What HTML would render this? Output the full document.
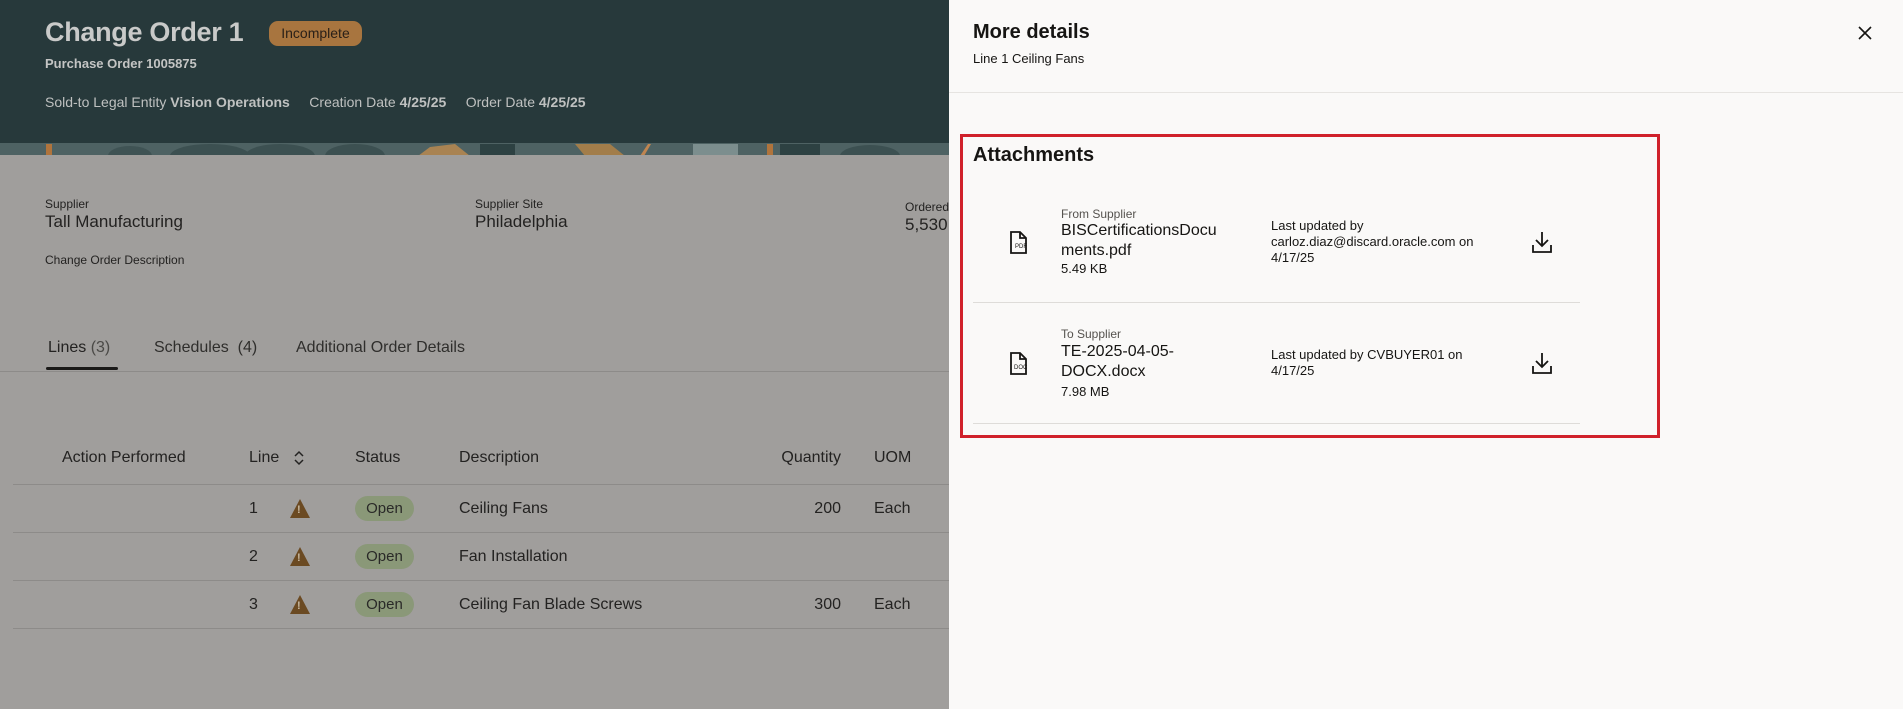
<!DOCTYPE html>
<html><head><meta charset="utf-8">
<style>
*{margin:0;padding:0;box-sizing:border-box}
body{width:1903px;height:709px;overflow:hidden;position:relative;font-family:"Liberation Sans",sans-serif;background:#a09e9c;color:#232221}
.a{position:absolute;white-space:nowrap}
#hdr{position:absolute;left:0;top:0;width:949px;height:143px;background:#27393b}
#strip{position:absolute;left:0;top:143px;width:949px;height:12px;background:#4e6263;overflow:hidden}
.line{position:absolute;left:13px;width:936px;height:1px;background:#8d8b89}
.open{position:absolute;width:59px;height:25px;border-radius:13px;background:#8a9878;font-size:15px;text-align:center;line-height:25px;color:#2a2a28}
.warn{position:absolute;width:0;height:0;border-left:10px solid transparent;border-right:10px solid transparent;border-bottom:19px solid #6b4a22}
.warn:after{content:"!";position:absolute;left:-3px;top:5px;font-size:11px;font-weight:bold;color:#c9b9a0}
#panel{position:absolute;left:949px;top:0;width:954px;height:709px;background:#faf9f8;color:#161513}
.p{position:absolute;white-space:nowrap}
</style></head><body>
<div id="hdr"></div>
<div id="strip">
<svg width="949" height="12">
<rect x="46" y="0" width="6" height="12" fill="#b0743c"/>
<ellipse cx="130" cy="12" rx="22" ry="10" fill="#3f5354"/>
<ellipse cx="210" cy="12" rx="40" ry="12" fill="#3c5051"/>
<ellipse cx="280" cy="12" rx="35" ry="12" fill="#3c5051"/>
<ellipse cx="355" cy="12" rx="30" ry="12" fill="#3c5051"/>
<path d="M418 12 L430 3 L455 0 L470 12Z" fill="#a98352"/>
<rect x="480" y="0" width="35" height="12" fill="#2d4142"/>
<path d="M575 0 L610 0 L625 12 L585 12Z" fill="#a27d4a"/>
<path d="M640 12 L648 0 L651 0 L644 12Z" fill="#c08550"/>
<rect x="693" y="0" width="45" height="12" fill="#7c8e8e"/>
<rect x="767" y="0" width="6" height="12" fill="#b0743c"/>
<rect x="780" y="0" width="40" height="12" fill="#2d4142"/>
<ellipse cx="870" cy="12" rx="30" ry="11" fill="#3c5051"/>
</svg></div>

<div class="a" style="left:45px;top:17px;font-size:27px;font-weight:bold;color:#c9cac9;letter-spacing:-0.3px">Change Order 1</div>
<div class="a" style="left:269px;top:21px;width:93px;height:25px;border-radius:9px;background:#a8753f;font-size:14px;line-height:25px;text-align:center;color:#2a2018">Incomplete</div>
<div class="a" style="left:45px;top:56px;font-size:13px;font-weight:bold;color:#c4c5c4">Purchase Order 1005875</div>
<div class="a" style="left:45px;top:94px;font-size:14px;color:#bfc1c0">Sold-to Legal Entity <b>Vision Operations</b>&nbsp;&nbsp;&nbsp;&nbsp; Creation Date <b>4/25/25</b>&nbsp;&nbsp;&nbsp;&nbsp; Order Date <b>4/25/25</b></div>

<div class="a" style="left:45px;top:197px;font-size:12px">Supplier</div>
<div class="a" style="left:45px;top:212px;font-size:17px">Tall Manufacturing</div>
<div class="a" style="left:475px;top:197px;font-size:12px">Supplier Site</div>
<div class="a" style="left:475px;top:212px;font-size:17px">Philadelphia</div>
<div class="a" style="left:905px;top:200px;font-size:12px">Ordered</div>
<div class="a" style="left:905px;top:215px;font-size:17px">5,530.</div>
<div class="a" style="left:45px;top:253px;font-size:12px">Change Order Description</div>

<div class="a" style="left:48px;top:339px;font-size:16px">Lines <span style="color:#4a4946">(3)</span></div>
<div class="a" style="left:154px;top:339px;font-size:16px;color:#2f2e2c">Schedules&nbsp; (4)</div>
<div class="a" style="left:296px;top:339px;font-size:16px;color:#2f2e2c">Additional Order Details</div>
<div class="a" style="left:46px;top:367px;width:72px;height:3px;background:#1b1a19;border-radius:2px"></div>
<div class="line" style="left:0;width:949px;top:371px"></div>

<div class="a" style="left:62px;top:449px;font-size:16px">Action Performed</div>
<div class="a" style="left:249px;top:449px;font-size:16px">Line</div>
<svg class="a" style="left:294px;top:450px" width="10" height="16"><path d="M1 6 L5 2 L9 6 M1 10 L5 14 L9 10" stroke="#232221" stroke-width="1.5" fill="none"/></svg>
<div class="a" style="left:355px;top:449px;font-size:16px">Status</div>
<div class="a" style="left:459px;top:449px;font-size:16px">Description</div>
<div class="a" style="left:760px;width:81px;text-align:right;top:449px;font-size:16px">Quantity</div>
<div class="a" style="left:874px;top:449px;font-size:16px">UOM</div>
<div class="line" style="top:484px"></div>

<div class="a" style="left:249px;top:500px;font-size:16px">1</div>
<div class="warn" style="left:290px;top:499px"></div>
<div class="open" style="left:355px;top:496px">Open</div>
<div class="a" style="left:459px;top:500px;font-size:16px">Ceiling Fans</div>
<div class="a" style="left:760px;width:81px;text-align:right;top:500px;font-size:16px">200</div>
<div class="a" style="left:874px;top:500px;font-size:16px">Each</div>
<div class="line" style="top:532px"></div>

<div class="a" style="left:249px;top:548px;font-size:16px">2</div>
<div class="warn" style="left:290px;top:547px"></div>
<div class="open" style="left:355px;top:544px">Open</div>
<div class="a" style="left:459px;top:548px;font-size:16px">Fan Installation</div>
<div class="line" style="top:580px"></div>

<div class="a" style="left:249px;top:596px;font-size:16px">3</div>
<div class="warn" style="left:290px;top:595px"></div>
<div class="open" style="left:355px;top:592px">Open</div>
<div class="a" style="left:459px;top:596px;font-size:16px">Ceiling Fan Blade Screws</div>
<div class="a" style="left:760px;width:81px;text-align:right;top:596px;font-size:16px">300</div>
<div class="a" style="left:874px;top:596px;font-size:16px">Each</div>
<div class="line" style="top:628px"></div>

<div id="panel">
<div class="p" style="left:24px;top:21px;font-size:20px;font-weight:bold">More details</div>
<div class="p" style="left:24px;top:51px;font-size:13px">Line 1 Ceiling Fans</div>
<svg class="p" style="left:909px;top:26px" width="14" height="14"><path d="M1 1L13 13M13 1L1 13" stroke="#161513" stroke-width="1.6"/></svg>
<div class="p" style="left:0;top:92px;width:954px;height:1px;background:#e6e4e1"></div>

<div class="p" style="left:11px;top:134px;width:700px;height:304px;border:3px solid #d0212b"></div>
<div class="p" style="left:24px;top:144px;font-size:20px;font-weight:bold">Attachments</div>

<svg class="p" style="left:60px;top:231px" width="20" height="24"><path d="M2 1 H11 L17 7 V22 H2 Z M11 1 V7 H17" stroke="#161513" stroke-width="1.8" fill="none"/><text x="6" y="17" font-size="6" font-family="Liberation Sans" fill="#161513">PDF</text></svg>
<div class="p" style="left:112px;top:207px;font-size:12px;color:#55524e">From Supplier</div>
<div class="p" style="left:112px;top:221px;font-size:16px;line-height:20px">BISCertificationsDocu<br>ments.pdf</div>
<div class="p" style="left:112px;top:261px;font-size:13px">5.49 KB</div>
<div class="p" style="left:322px;top:218px;font-size:13px;line-height:16px">Last updated by<br>carloz.diaz@discard.oracle.com on<br>4/17/25</div>
<svg class="p" style="left:582px;top:231px" width="22" height="22"><path d="M11 1 V15 M5 9 L11 15 L17 9 M2 14 V21 H20 V14" stroke="#161513" stroke-width="1.8" fill="none"/></svg>
<div class="p" style="left:24px;top:302px;width:607px;height:1px;background:#dedcd9"></div>

<svg class="p" style="left:60px;top:352px" width="20" height="24"><path d="M2 1 H11 L17 7 V22 H2 Z M11 1 V7 H17" stroke="#161513" stroke-width="1.8" fill="none"/><text x="5" y="17" font-size="6" font-family="Liberation Sans" fill="#161513">DOC</text></svg>
<div class="p" style="left:112px;top:327px;font-size:12px;color:#55524e">To Supplier</div>
<div class="p" style="left:112px;top:342px;font-size:16px;line-height:20px">TE-2025-04-05-<br>DOCX.docx</div>
<div class="p" style="left:112px;top:384px;font-size:13px">7.98 MB</div>
<div class="p" style="left:322px;top:347px;font-size:13px;line-height:16px">Last updated by CVBUYER01 on<br>4/17/25</div>
<svg class="p" style="left:582px;top:352px" width="22" height="22"><path d="M11 1 V15 M5 9 L11 15 L17 9 M2 14 V21 H20 V14" stroke="#161513" stroke-width="1.8" fill="none"/></svg>
<div class="p" style="left:24px;top:423px;width:607px;height:1px;background:#dedcd9"></div>
</div>
</body></html>
